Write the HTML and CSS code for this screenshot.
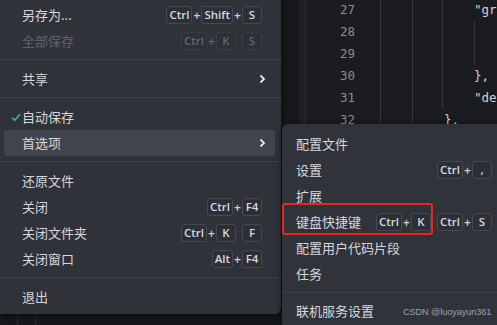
FILE: index.html
```html
<!DOCTYPE html>
<html lang="zh">
<head>
<meta charset="utf-8">
<link rel="stylesheet" href="styles.css">
</head>
<body>
<div class="stage">
  <div class="editor">
    <div class="side"></div>
    <div class="gutter">
      <div>27</div><div>28</div><div>29</div><div>30</div><div>31</div><div>32</div>
    </div>
    <div class="code">
      <div class="ln d4">"gr</div>
      <div class="ln d4"><span class="guide"></span></div>
      <div class="ln d4"><span class="guide"></span></div>
      <div class="ln d4">},</div>
      <div class="ln d4">"de</div>
      <div class="ln d3">},</div>
    </div>
  </div>

  <div class="menu main">
    <div class="item"><span class="label">另存为...</span><span class="keys"><kbd>Ctrl</kbd><i>+</i><kbd>Shift</kbd><i>+</i><kbd>S</kbd></span></div>
    <div class="item disabled"><span class="label">全部保存</span><span class="keys"><kbd>Ctrl</kbd><i>+</i><kbd>K</kbd><b class="chord"></b><kbd>S</kbd></span></div>
    <div class="sep"></div>
    <div class="item"><span class="label">共享</span><svg class="chev" width="7" height="10" viewBox="0 0 7 10"><polyline points="1.5,1.5 5,5 1.5,8.5" fill="none" stroke="#e6e6e6" stroke-width="1.8"/></svg></div>
    <div class="sep"></div>
    <div class="item"><svg class="check" width="10" height="9" viewBox="0 0 10 9"><polyline points="1,4.8 3.6,7.4 9,1.4" fill="none" stroke="#3fb27f" stroke-width="1.6"/></svg><span class="label">自动保存</span></div>
    <div class="item active"><span class="label">首选项</span><svg class="chev" width="7" height="10" viewBox="0 0 7 10"><polyline points="1.5,1.5 5,5 1.5,8.5" fill="none" stroke="#e6e6e6" stroke-width="1.8"/></svg></div>
    <div class="sep"></div>
    <div class="item"><span class="label">还原文件</span></div>
    <div class="item"><span class="label">关闭</span><span class="keys"><kbd>Ctrl</kbd><i>+</i><kbd>F4</kbd></span></div>
    <div class="item"><span class="label">关闭文件夹</span><span class="keys"><kbd>Ctrl</kbd><i>+</i><kbd>K</kbd><b class="chord"></b><kbd>F</kbd></span></div>
    <div class="item"><span class="label">关闭窗口</span><span class="keys"><kbd>Alt</kbd><i>+</i><kbd>F4</kbd></span></div>
    <div class="sep"></div>
    <div class="item"><span class="label">退出</span></div>
  </div>

  <div class="menu sub">
    <div class="item"><span class="label">配置文件</span></div>
    <div class="item"><span class="label">设置</span><span class="keys"><kbd>Ctrl</kbd><i>+</i><kbd>,</kbd></span></div>
    <div class="item"><span class="label">扩展</span></div>
    <div class="item"><span class="label fixed">键盘快捷键</span><span class="keys first"><kbd>Ctrl</kbd><i>+</i><kbd>K</kbd></span><span class="keys"><kbd>Ctrl</kbd><i>+</i><kbd>S</kbd></span></div>
    <div class="item"><span class="label">配置用户代码片段</span></div>
    <div class="item"><span class="label">任务</span></div>
    <div class="sep"></div>
    <div class="item"><span class="label">联机服务设置</span></div>
  </div>

  <div class="mark"></div>
  <div class="watermark">CSDN @luoyayun361</div>
</div>
</body>
</html>
```

FILE: styles.css
```css
html, body {
  margin: 0;
  padding: 0;
  background: #1b1c20;
}
.stage {
  position: relative;
  width: 497px;
  height: 325px;
  overflow: hidden;
  background: #1b1c20;
  font-family: "Noto Sans CJK SC", "Noto Sans", sans-serif;
}

/* editor background */
.editor {
  display: flex;
  margin-top: -1px;
  height: 340px;
  font-family: "DejaVu Sans Mono", monospace;
  font-size: 12.5px;
  line-height: 22px;
}
.side {
  width: 299px;
  flex: none;
  background: #17181b;
  border-right: 6px solid #1e1f23;
  background-image:
    linear-gradient(#2a2b30, #2a2b30),
    linear-gradient(#2a2b30, #2a2b30);
  background-size: 1px 100%, 1px 100%;
  background-position: 17px 0, 35px 0;
  background-repeat: no-repeat;
}
.gutter {
  width: 49px;
  flex: none;
  border-left: 1px solid #2c2d32;
  text-align: right;
  color: #8b8d95;
}
.code {
  flex: 1;
  color: #d2d3d6;
  background-image:
    linear-gradient(#34353b, #34353b),
    linear-gradient(#34353b, #34353b),
    linear-gradient(#34353b, #34353b);
  background-size: 1px 100%, 1px 100%, 1px 110px;
  background-position: 25px 0, 57px 0, 87px 0;
  background-repeat: no-repeat;
}
.ln { height: 22px; white-space: pre; }
.d4 { padding-left: 119px; }
.d3 { padding-left: 89px; }
.guide {
  display: inline-block;
  height: 22px;
  vertical-align: top;
  border-left: 1px solid #34353b;
}

/* menus */
.menu {
  position: absolute;
  background: #30323a;
  color: #d6d7da;
  font-size: 13px;
  box-shadow: 0 2px 8px rgba(0, 0, 0, 0.55);
}
.main {
  left: 0;
  top: -2px;
  width: 281px;
  padding: 4px 0;
  border-radius: 0 0 6px 0;
}
.sub {
  left: 282px;
  top: 124px;
  width: 224px;
  padding: 7px 0 20px;
  border-radius: 6px 0 0 0;
  background: #31333b;
}
.item {
  display: flex;
  align-items: center;
  height: 26px;
  border-radius: 4px;
  white-space: nowrap;
}
.main .item {
  margin: 0 6px 0 4px;
  padding: 0 13px 0 18px;
}
.sub .item {
  margin: 0 4px;
  padding: 0 10px 0 10px;
}
.item.active { background: #41434d; }
.label { flex: 1; line-height: 26px; }
.label.fixed { flex: none; }
.disabled { color: #5f616a; }
.check { margin-left: -11px; margin-right: 1px; flex: none; }
.chev { flex: none; margin-right: -4px; }

.sep {
  height: 1px;
  background: #3e4049;
  margin: 5px 0 6px;
}
.sub .sep { margin: 5px 0 5px; }

.keys {
  display: flex;
  align-items: center;
  font-family: "Open Sans", "Noto Sans", sans-serif;
  font-size: 11.5px;
  font-weight: 600;
}
.keys.first { margin-left: 15px; margin-right: auto; }
kbd {
  box-sizing: border-box;
  min-width: 20px;
  height: 18px;
  padding: 0 2px;
  border: 1px solid #474952;
  border-radius: 3px;
  background: #2d2f36;
  color: #d8d9dc;
  font: inherit;
  line-height: 16px;
  text-align: center;
}
.keys i {
  font-style: normal;
  width: 9px;
  text-align: center;
  color: #cfd0d3;
  font-size: 12px;
}
.chord { width: 6px; }
.disabled kbd {
  color: #63656d;
  border-color: #3a3c44;
  background: #2e3037;
}
.disabled .keys i { color: #63656d; }

/* annotation */
.mark {
  position: absolute;
  left: 282px;
  top: 203px;
  width: 151px;
  height: 32px;
  box-sizing: border-box;
  border: 2px solid #e8261e;
  border-radius: 3px;
}
.watermark {
  position: absolute;
  left: 403px;
  top: 305px;
  white-space: nowrap;
  font-family: "Liberation Sans", sans-serif;
  font-size: 9.2px;
  line-height: 14px;
  color: #9ea0a6;
  letter-spacing: -0.1px;
}
```
